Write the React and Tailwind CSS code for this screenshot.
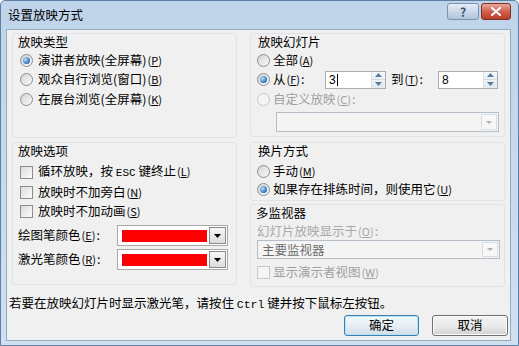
import React from "react";

const M = ({ k }) => (
  <span className="text-[11px] mx-[1px]">
    (<span className="underline">{k}</span>)
  </span>
);

const Radio = ({ checked, disabled }) => (
  <span
    className={
      "w-[13px] h-[13px] shrink-0 rounded-full border flex items-center justify-center " +
      (disabled
        ? "border-[#c8c8c8] bg-[#f4f4f4]"
        : "border-[#8d8d8d] bg-gradient-to-br from-[#d4d4d4] to-[#fafafa]")
    }
  >
    {checked && (
      <span className="w-[7px] h-[7px] rounded-full bg-[radial-gradient(circle_at_35%_35%,#b6e2fb,#2a6fb8_70%,#1b4f8c)]" />
    )}
  </span>
);

const Check = ({ disabled }) => (
  <span
    className={
      "w-[13px] h-[13px] shrink-0 border " +
      (disabled
        ? "border-[#c8c8c8] bg-[#f4f4f4]"
        : "border-[#8d8d8d] bg-gradient-to-br from-[#dcdcdc] to-[#fbfbfb]")
    }
  />
);

const Spin = ({ value, caret }) => (
  <div className="h-[18px] border border-[#abadb3] bg-white flex">
    <div className="flex-1 pl-[3px] text-[12px] leading-[16px] font-['Liberation_Sans',sans-serif]">
      {value}
      {caret && <span className="inline-block w-[1px] h-[12px] bg-black align-[-2px] ml-[1px]" />}
    </div>
    <div className="w-[14px] flex flex-col border-l border-[#dfe3e8] bg-gradient-to-b from-[#f6f8fa] to-[#e4e9ee]">
      <div className="flex-1 flex items-center justify-center border-b border-[#d2d8de]">
        <svg width="7" height="4" viewBox="0 0 7 4"><path d="M0 4 L3.5 0 L7 4 Z" fill="#5a7aa0" /></svg>
      </div>
      <div className="flex-1 flex items-center justify-center">
        <svg width="7" height="4" viewBox="0 0 7 4"><path d="M0 0 L3.5 4 L7 0 Z" fill="#5a7aa0" /></svg>
      </div>
    </div>
  </div>
);

const DisabledSelect = ({ text, w, h }) => (
  <div className={"border border-[#b4bfca] bg-[#f4f4f4] flex " + w + " " + h}>
    <div className="flex-1 pl-[4px] text-[#6d6d6d] leading-[17px]">{text}</div>
    <div className="w-[16px] m-[1px] border border-[#dadde0] bg-[#f7f7f7] flex items-center justify-center">
      <svg width="6" height="3" viewBox="0 0 6 3"><path d="M0 0 L3 3 L6 0 Z" fill="#b0b0b0" /></svg>
    </div>
  </div>
);

const ColorPick = () => (
  <div className="w-[111px] h-[21px] border border-[#a9a9a9] bg-white flex items-center p-[1px]">
    <div className="flex-1 h-full flex items-center pl-[3px] pr-[2px]">
      <div className="w-full h-[12px] bg-[#ff0000]" />
    </div>
    <div className="w-[17px] h-full border border-[#8b8b8b] bg-gradient-to-b from-[#f6f6f6] to-[#dcdcdc] flex items-center justify-center">
      <svg width="7" height="4" viewBox="0 0 7 4"><path d="M0 0 L3.5 4 L7 0 Z" fill="#000" /></svg>
    </div>
  </div>
);

const Box = ({ className, children }) => (
  <div className={"border border-[#e0e2e4] rounded-[3px] " + className}>{children}</div>
);

export default function App() {
  return (
    <div className="w-[519px] h-[346px] flex flex-col bg-gradient-to-b from-[#bfd4ea] to-[#cfe0f1] border border-[#5d7fa3] rounded-t-[5px] font-['Noto_Sans_CJK_SC',sans-serif] text-[12.5px] text-black overflow-hidden">
      {/* title bar */}
      <div className="h-[28px] flex justify-between shrink-0">
        <div className="pl-[7px] leading-[28px] text-[12.5px]">设置放映方式</div>
        <div className="flex pt-[2px] pr-[7px] gap-[2px] items-start">
          <div className="w-[32px] h-[17px] rounded-[3px] border border-[#7892b0] bg-gradient-to-b from-[#e5edf6] via-[#c9d8e8] to-[#afc5dc] flex items-center justify-center text-[12px] font-bold text-[#3f556e] leading-none">
            ?
          </div>
          <div className="w-[30px] h-[17px] rounded-[3px] border border-[#7d3023] bg-gradient-to-b from-[#e8a898] via-[#d0604b] to-[#b93d28] flex items-center justify-center">
            <svg width="10" height="9" viewBox="0 0 10 9">
              <path d="M1 1 L9 8 M9 1 L1 8" stroke="#fff" strokeWidth="2.2" strokeLinecap="round" />
            </svg>
          </div>
        </div>
      </div>

      {/* client */}
      <div className="ml-[5px] mr-[7px] mb-[4px] flex-1 bg-[#f0f0f0] border border-[#94abc4] flex flex-col">
        <div className="flex pt-[3px] pl-[5px] gap-[13px]">
          {/* left column */}
          <div className="w-[225px] flex flex-col gap-[4px]">
            <Box className="h-[105px] pl-[5px]">
              <div className="h-[15px] leading-[15px]">放映类型</div>
              <div className="mt-[1px] pl-[2px]">
                <div className="h-[20px] flex items-center gap-[5px]">
                  <Radio checked />
                  <span>演讲者放映(全屏幕)<M k="P" /></span>
                </div>
                <div className="h-[19px] flex items-center gap-[5px]">
                  <Radio />
                  <span>观众自行浏览(窗口)<M k="B" /></span>
                </div>
                <div className="h-[20px] flex items-center gap-[5px]">
                  <Radio />
                  <span>在展台浏览(全屏幕)<M k="K" /></span>
                </div>
              </div>
            </Box>
            <Box className="h-[143px] pl-[5px]">
              <div className="h-[15px] leading-[15px]">放映选项</div>
              <div className="mt-[4px] pl-[2px]">
                <div className="h-[20px] flex items-center gap-[5px]">
                  <Check />
                  <span>
                    循环放映，按 <span className="font-['Liberation_Mono',monospace] text-[11px]">ESC</span> 键终止<M k="L" />
                  </span>
                </div>
                <div className="h-[20px] flex items-center gap-[5px]">
                  <Check />
                  <span>放映时不加旁白<M k="N" /></span>
                </div>
                <div className="h-[19px] flex items-center gap-[5px]">
                  <Check />
                  <span>放映时不加动画<M k="S" /></span>
                </div>
              </div>
              <div className="mt-[4px] flex items-center">
                <span className="w-[99px]">绘图笔颜色<M k="E" />:</span>
                <ColorPick />
              </div>
              <div className="mt-[3px] flex items-center">
                <span className="w-[99px]">激光笔颜色<M k="R" />:</span>
                <ColorPick />
              </div>
            </Box>
          </div>

          {/* right column */}
          <div className="w-[255px] flex flex-col">
            <Box className="h-[104px] pl-[6px]">
              <div className="h-[15px] leading-[15px] pl-[1px]">放映幻灯片</div>
              <div className="mt-[1px]">
                <div className="h-[20px] flex items-center gap-[3px]">
                  <Radio />
                  <span>全部<M k="A" /></span>
                </div>
                <div className="h-[19px] flex items-center">
                  <Radio checked />
                  <span className="ml-[3px] w-[52px]">从<M k="F" />:</span>
                  <div className="w-[61px]">
                    <Spin value="3" caret />
                  </div>
                  <span className="ml-[5px] w-[47px]">到<M k="T" />:</span>
                  <div className="w-[60px]">
                    <Spin value="8" />
                  </div>
                </div>
                <div className="h-[20px] flex items-center gap-[3px] text-[#a0a0a0]">
                  <Radio disabled />
                  <span>自定义放映<M k="C" />:</span>
                </div>
                <div className="mt-[3px] ml-[19px]">
                  <DisabledSelect text="" w="w-[223px]" h="h-[20px]" />
                </div>
              </div>
            </Box>
            <Box className="mt-[5px] h-[59px] pl-[6px]">
              <div className="h-[15px] leading-[15px] pl-[1px]">换片方式</div>
              <div className="mt-[4px]">
                <div className="h-[18px] flex items-center gap-[3px]">
                  <Radio />
                  <span>手动<M k="M" /></span>
                </div>
                <div className="h-[18px] flex items-center gap-[3px]">
                  <Radio checked />
                  <span>如果存在排练时间，则使用它<M k="U" /></span>
                </div>
              </div>
            </Box>
            <Box className="mt-[3px] h-[83px] pl-[5px]">
              <div className="h-[15px] leading-[15px]">多监视器</div>
              <div className="mt-[4px] h-[14px] leading-[14px] pl-[1px] text-[#a8a8a8]">
                幻灯片放映显示于<M k="O" />:
              </div>
              <div className="mt-[2px] pl-[1px]">
                <DisabledSelect text="主要监视器" w="w-[243px]" h="h-[19px]" />
              </div>
              <div className="mt-[4px] h-[18px] flex items-center gap-[3px] pl-[1px] text-[#a0a0a0]">
                <Check disabled />
                <span>显示演示者视图<M k="W" /></span>
              </div>
            </Box>
          </div>
        </div>

        <div className="mt-[8px] pl-[2px] h-[16px] leading-[16px]">
          若要在放映幻灯片时显示激光笔，请按住 <span className="font-['Liberation_Mono',monospace] text-[11.5px]">Ctrl</span> 键并按下鼠标左按钮。
        </div>

        <div className="mt-[4px] flex justify-end gap-[13px] pr-[2px]">
          <div className="w-[75px] h-[21px] rounded-[3px] border border-[#3c7fb1] bg-gradient-to-b from-[#f2f8fc] via-[#e6eff6] to-[#cfdde8] shadow-[inset_0_0_0_1px_#b7e3fa] flex items-center justify-center">
            确定
          </div>
          <div className="w-[76px] h-[21px] rounded-[3px] border border-[#707070] bg-gradient-to-b from-[#f2f2f2] via-[#ebebeb] to-[#d2d2d2] shadow-[inset_0_0_0_1px_#fcfcfc] flex items-center justify-center">
            取消
          </div>
        </div>
      </div>
    </div>
  );
}
